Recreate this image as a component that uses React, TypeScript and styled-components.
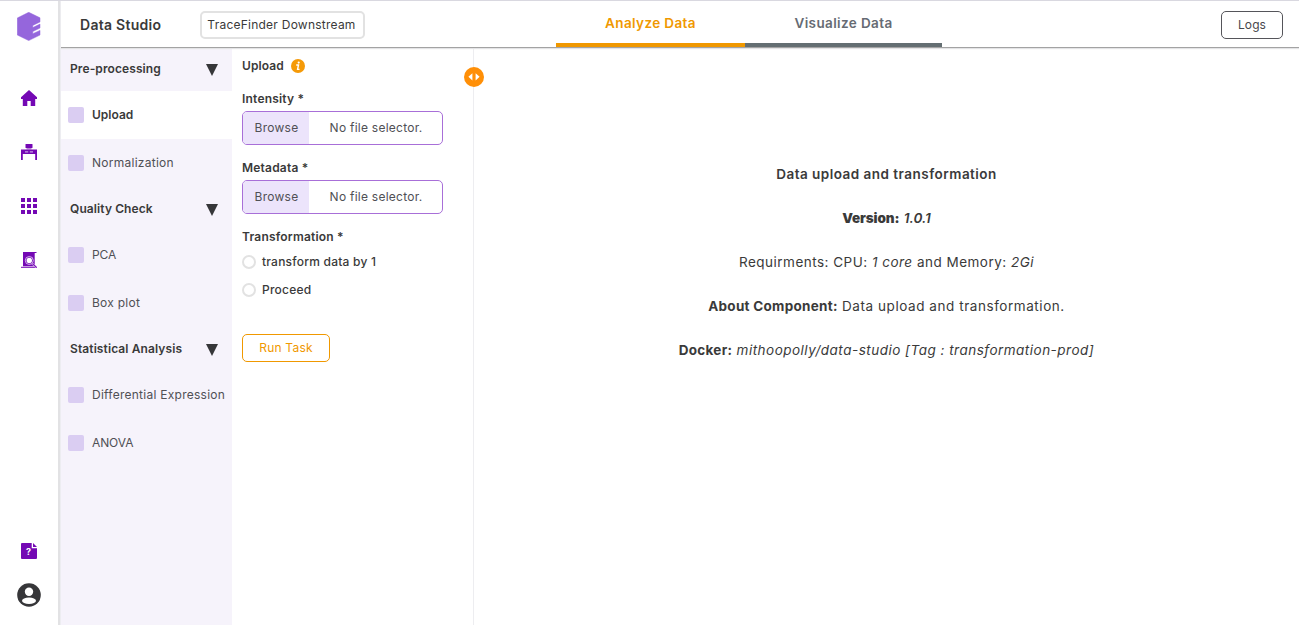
import React from "react";
import styled, { createGlobalStyle, css } from "styled-components";

const GlobalStyle = createGlobalStyle`
  * { box-sizing: border-box; }
  body {
    margin: 0;
    background: #fff;
    color: #3a3a3a;
    font-family: Inter, "Liberation Sans", sans-serif;
    font-size: 12px;
  }
  button { font-family: inherit; cursor: pointer; }
`;

const Shell = styled.div`
  display: flex;
  height: 100vh;
  border-top: 1px solid #d9d8e0;
  overflow: hidden;
`;

const Rail = styled.nav`
  display: flex;
  flex-direction: column;
  align-items: center;
  width: 58px;
  flex: none;
  padding: 11px 0 18px;
`;

const RailDivider = styled.div`
  width: 3px;
  flex: none;
  background: linear-gradient(to right, #e2e2e4 0 2px, #ededf1 2px);
`;

const RailLinks = styled.div`
  display: flex;
  flex-direction: column;
  gap: 38px;
  margin-top: 49px;
  svg { display: block; }
`;

const RailFooter = styled.div`
  display: flex;
  flex-direction: column;
  align-items: center;
  gap: 24px;
  margin-top: auto;
  svg { display: block; }
`;

const Workspace = styled.div`
  display: flex;
  flex-direction: column;
  flex: 1;
  min-width: 0;
`;

const Header = styled.header`
  position: relative;
  display: flex;
  height: 47px;
  flex: none;
  padding: 0 16px 0 19px;
  border-bottom: 1px solid #a3a3a3;
  box-shadow: 0 1px 1px #e4e4e6;
  z-index: 1;
`;

const Title = styled.h1`
  width: 120px;
  margin: 0;
  font-size: 14px;
  font-weight: 600;
  line-height: 47px;
  letter-spacing: 0.27px;
`;

const ProjectName = styled.div`
  width: 165px;
  height: 28px;
  margin-top: 10px;
  padding-right: 2px;
  border: 2px solid #e2e2e2;
  border-radius: 5px;
  line-height: 23px;
  text-align: center;
  letter-spacing: 0.24px;
`;

const Tabs = styled.div`
  display: flex;
  margin-left: 191px;
`;

const Tab = styled.div<{ $active?: boolean }>`
  width: ${(p) => (p.$active ? 189 : 197)}px;
  height: 46px;
  border-bottom: 4px solid ${(p) => (p.$active ? "#f09800" : "#646e72")};
  color: ${(p) => (p.$active ? "#f09800" : "#666b73")};
  font-size: 13.5px;
  font-weight: 600;
  line-height: 45px;
  letter-spacing: 0.38px;
  text-align: center;
`;

const LogsButton = styled.button`
  width: 62px;
  height: 28px;
  margin: 10px 0 0 auto;
  padding: 0 0 1px;
  border: 1px solid #55555a;
  border-radius: 5px;
  background: #fff;
  color: #47474c;
  font-size: 12px;
  letter-spacing: 0.1px;
`;

const Body = styled.div`
  display: flex;
  flex: 1;
  min-height: 0;
`;

const Sidebar = styled.aside`
  width: 171px;
  flex: none;
  margin-top: -1px;
  background: #f6f3fb;
`;

const GroupHeader = styled.div`
  display: flex;
  align-items: center;
  justify-content: space-between;
  height: 44px;
  padding: 0 14px 0 9px;
  font-weight: 600;
  letter-spacing: 0.1px;
  svg { margin-top: 1px; }
`;

const GroupName = styled.span`
  padding-bottom: 1px;
`;

const Step = styled.div<{ $active?: boolean }>`
  display: flex;
  align-items: center;
  gap: 8px;
  height: 48px;
  padding-left: 7px;
  color: #505055;
  letter-spacing: 0.26px;
  white-space: nowrap;
  ${(p) =>
    p.$active &&
    css`
      background: #fff;
      color: #3a3a3a;
      font-weight: 600;
      letter-spacing: 0;
    `}
`;

const StepBox = styled.span`
  width: 16px;
  height: 16px;
  border-radius: 2px;
  background: #dacdf2;
`;

const StepName = styled.span<{ $tight?: boolean }>`
  padding-bottom: 1px;
  ${(p) => p.$tight && "letter-spacing: -0.1px;"}
`;

const Form = styled.section`
  position: relative;
  width: 242px;
  flex: none;
  padding: 8px 0 0 10px;
  border-right: 1px solid #ededf0;
`;

const FormTitle = styled.h2`
  display: flex;
  align-items: center;
  gap: 7px;
  height: 18px;
  margin: 0 0 16px;
  font-size: 12px;
  font-weight: 600;
  letter-spacing: 0.1px;
  svg { margin-top: 1px; }
`;

const Field = styled.div`
  height: 69px;
  &:last-of-type { margin-bottom: 0; }
`;

const Label = styled.div`
  height: 21px;
  font-weight: 600;
  line-height: 18px;
  letter-spacing: 0.2px;
`;

const OptionsLabel = styled(Label)`
  height: 20px;
  line-height: 17px;
`;

const FilePicker = styled.div`
  display: flex;
  width: 201px;
  height: 34px;
  border: 1px solid #a86fd8;
  border-radius: 5px;
  color: #505055;
  line-height: 32px;
  letter-spacing: 0.25px;
  overflow: hidden;
`;

const Browse = styled.div`
  width: 66px;
  padding-left: 1px;
  background: #ece4fb;
  text-align: center;
`;

const FileName = styled.div`
  flex: 1;
  padding-left: 1px;
  text-align: center;
`;

const Option = styled.label`
  display: flex;
  align-items: center;
  gap: 6px;
  height: 28px;
  font-weight: 500;
  letter-spacing: 0.22px;
`;

const OptionText = styled.span`
  padding-bottom: 1px;
`;

const Radio = styled.span`
  width: 14px;
  height: 14px;
  border: 2px solid #e2e2e2;
  border-radius: 50%;
`;

const RunButton = styled.button`
  display: block;
  width: 88px;
  height: 28px;
  margin-top: 30px;
  padding: 0 0 1px;
  border: 1px solid #f09800;
  border-radius: 5px;
  background: #fff;
  color: #f09800;
  font-size: 12px;
  letter-spacing: 0.22px;
`;

const Resizer = styled.div`
  position: absolute;
  top: 19px;
  right: -11px;
  svg { display: block; }
`;

const Details = styled.main`
  flex: 1;
  padding-top: 115px;
  text-align: center;
  font-size: 13.5px;
  line-height: 22px;
`;

const Line = styled.p<{ $semi?: boolean }>`
  margin: 0 0 22px;
  letter-spacing: 0.49px;
  ${(p) =>
    p.$semi &&
    css`
      font-weight: 600;
      letter-spacing: 0.48px;
    `}
`;

const Strong = styled.b<{ $heavy?: boolean }>`
  font-weight: ${(p) => (p.$heavy ? 900 : 700)};
  letter-spacing: ${(p) => (p.$heavy ? -0.1 : 0.28)}px;
`;

const Semi = styled.i`
  font-weight: 600;
  letter-spacing: 0;
`;

const Plain = styled.span`
  letter-spacing: 0.56px;
`;

const purple = "#7408b4";

const Logo = () => (
  <svg width="24" height="29" viewBox="0 0 24 29">
    <path
      d="M11.7 .3 23 5.8V9.9L15.8 13.4V15.6L23 12.1V16L15.8 19.5V21.7L23 18.4V23L11.7 28.6 .3 23V6Z"
      fill="#9566dc"
      stroke="#9566dc"
      strokeWidth=".5"
      strokeLinejoin="round"
    />
  </svg>
);

const HomeIcon = () => (
  <svg width="16" height="16" viewBox="0 0 16 16" fill={purple}>
    <path d="M8 0 16 7.2V9H14.2V16H9.7V11H6.3V16H1.8V9H0V7.2Z" />
  </svg>
);

const DeskIcon = () => (
  <svg width="16" height="16" viewBox="0 0 16 16" fill={purple}>
    <rect x="4.5" width="7" height="4" rx=".5" />
    <path d="M5.5 4h5v1.5h-5Z" opacity=".5" />
    <path d="M0 5.6h16V16h-1.8V9.9H1.8V16H0Z" />
    <path d="M4 7.2h3.2v1.3H4ZM8.8 7.2H12v1.3H8.8Z" fill="#c59be4" />
  </svg>
);

const GridIcon = () => (
  <svg width="16" height="16" viewBox="0 0 16 16" fill={purple}>
    {[0, 6, 12].map((y) =>
      [0, 6, 12].map((x) => <rect key={`${x}-${y}`} x={x} y={y} width="4" height="4" />)
    )}
  </svg>
);

const ReportIcon = () => (
  <svg width="16" height="16" viewBox="0 0 16 16" fill="none">
    <path d="M2 0H15.5V1H13.7V14.2H2Z" fill={purple} />
    <path d="M0 15.3H15.5" stroke={purple} strokeWidth="1" />
    <circle cx="8.3" cy="8.5" r="4" stroke="#dfc5ef" strokeWidth=".9" />
    <circle cx="8.3" cy="8.5" r="2.7" fill="#fff" />
    <path d="m11.2 11.4 4.3 4" stroke="#dfc5ef" strokeWidth="2" />
    <path d="m11.5 11.6 4.2 4" stroke={purple} strokeWidth="1.1" />
  </svg>
);

const HelpIcon = () => (
  <svg width="16" height="16" viewBox="0 0 16 16">
    <path d="M0 1Q0 0 1 0H10.7V5.2H16V15Q16 16 15 16H1Q0 16 0 15Z" fill={purple} />
    <path d="M12 0 16 4H12Z" fill={purple} />
    <text x="7.5" y="12" fontSize="9" fontWeight="700" textAnchor="middle" fill="#fff">?</text>
  </svg>
);

const UserIcon = () => (
  <svg width="24" height="24" viewBox="0 0 24 24">
    <circle cx="12" cy="12" r="11.8" fill="#363639" />
    <circle cx="12" cy="8.7" r="4.2" fill="#fff" />
    <ellipse cx="12" cy="17.8" rx="7" ry="3.2" fill="#fff" />
  </svg>
);

const Arrow = () => (
  <svg width="12" height="12" viewBox="0 0 12 12">
    <path d="M0 0H12L6 12Z" fill="#363639" />
  </svg>
);

const InfoIcon = () => (
  <svg width="14" height="14" viewBox="0 0 14 14">
    <circle cx="7" cy="7" r="7" fill="#f59a08" />
    <circle cx="7.7" cy="3.6" r="1.1" fill="#fff" />
    <path d="M5.2 6H7.5L6.6 10.4H8.5" fill="none" stroke="#fff" strokeWidth="1.4" />
  </svg>
);

const ResizeIcon = () => (
  <svg width="20" height="20" viewBox="0 0 20 20">
    <circle cx="10" cy="10" r="10" fill="#ff8f07" />
    <path d="M8.4 6.2V13.4L4.4 9.8ZM11.6 6.2V13.4L15.6 9.8Z" fill="#fff" />
  </svg>
);

const groups = [
  { name: "Pre-processing", steps: ["Upload", "Normalization"] },
  { name: "Quality Check", steps: ["PCA", "Box plot"] },
  { name: "Statistical Analysis", steps: ["Differential Expression", "ANOVA"] },
];

export default function App() {
  return (
    <Shell>
      <GlobalStyle />
      <Rail>
        <Logo />
        <RailLinks>
          <HomeIcon />
          <DeskIcon />
          <GridIcon />
          <ReportIcon />
        </RailLinks>
        <RailFooter>
          <HelpIcon />
          <UserIcon />
        </RailFooter>
      </Rail>
      <RailDivider />
      <Workspace>
        <Header>
          <Title>Data Studio</Title>
          <ProjectName>TraceFinder Downstream</ProjectName>
          <Tabs>
            <Tab $active>Analyze Data</Tab>
            <Tab>Visualize Data</Tab>
          </Tabs>
          <LogsButton>Logs</LogsButton>
        </Header>
        <Body>
          <Sidebar>
            {groups.map((group) => (
              <React.Fragment key={group.name}>
                <GroupHeader>
                  <GroupName>{group.name}</GroupName>
                  <Arrow />
                </GroupHeader>
                {group.steps.map((step) => (
                  <Step key={step} $active={step === "Upload"}>
                    <StepBox />
                    <StepName $tight={step === step.toUpperCase()}>{step}</StepName>
                  </Step>
                ))}
              </React.Fragment>
            ))}
          </Sidebar>
          <Form>
            <FormTitle>
              Upload
              <InfoIcon />
            </FormTitle>
            {["Intensity *", "Metadata *"].map((label) => (
              <Field key={label}>
                <Label>{label}</Label>
                <FilePicker>
                  <Browse>Browse</Browse>
                  <FileName>No file selector.</FileName>
                </FilePicker>
              </Field>
            ))}
            <OptionsLabel>Transformation *</OptionsLabel>
            <Option>
              <Radio />
              <OptionText>transform data by 1</OptionText>
            </Option>
            <Option>
              <Radio />
              <OptionText>Proceed</OptionText>
            </Option>
            <RunButton>Run Task</RunButton>
            <Resizer>
              <ResizeIcon />
            </Resizer>
          </Form>
          <Details>
            <Line $semi>Data upload and transformation</Line>
            <Line>
              <Strong $heavy>Version:</Strong> <Semi>1.0.1</Semi>
            </Line>
            <Line>
              Requirments: CPU: <i>1 core</i> and Memory: <i>2Gi</i>
            </Line>
            <Line>
              <Strong>About Component:</Strong> <Plain>Data upload and transformation.</Plain>
            </Line>
            <Line>
              <Strong>Docker:</Strong> <i>mithoopolly/data-studio [Tag : transformation-prod]</i>
            </Line>
          </Details>
        </Body>
      </Workspace>
    </Shell>
  );
}
